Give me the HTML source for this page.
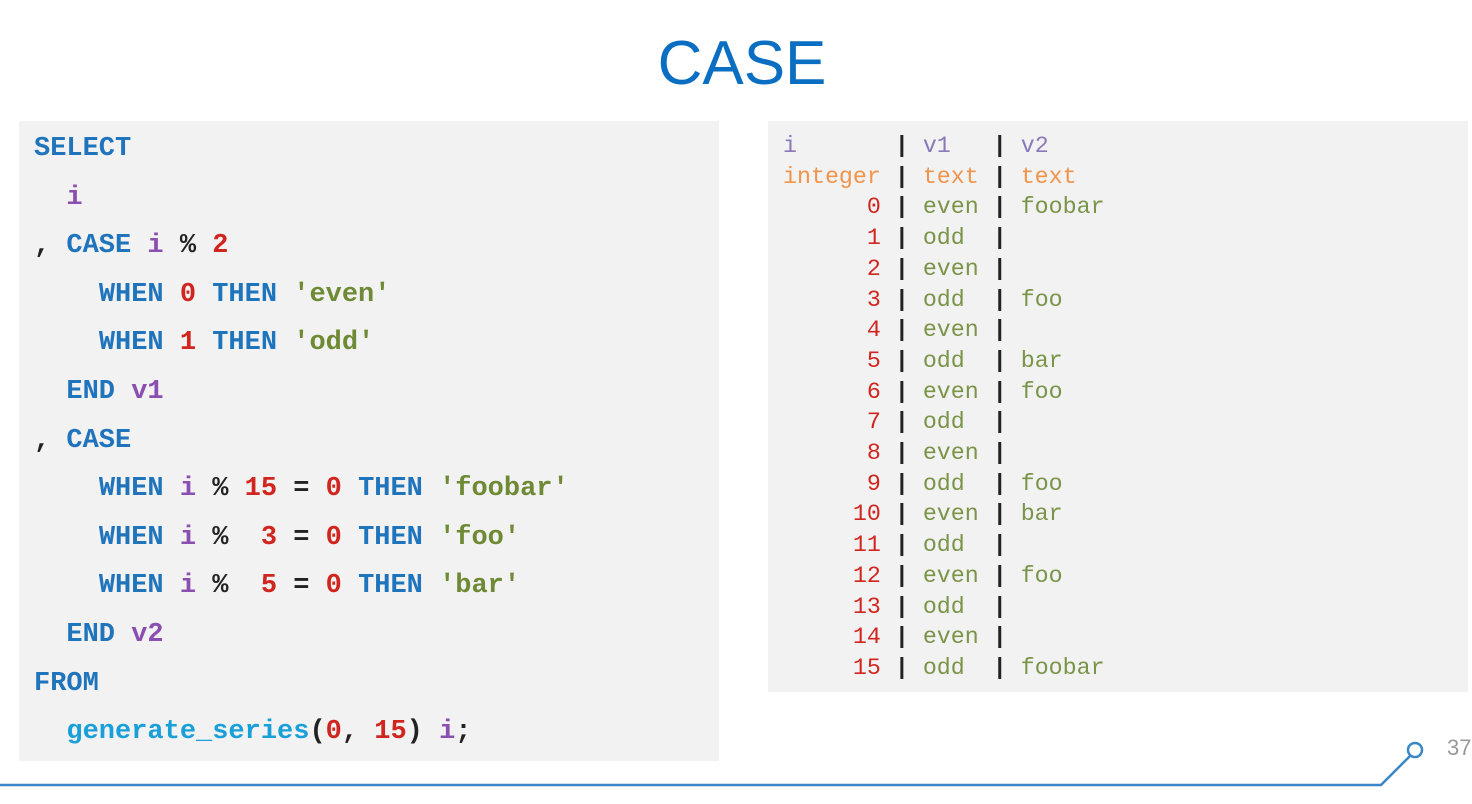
<!DOCTYPE html>
<html><head><meta charset="utf-8"><style>
body{margin:0;width:1472px;height:804px;background:#fff;position:relative;overflow:hidden;font-family:"Liberation Sans",sans-serif}
.title{position:absolute;left:0;width:1484px;top:24px;text-align:center;font-size:62px;color:#0a6fc2;line-height:80px}
.lp{position:absolute;left:19px;top:121px;width:700px;height:640px;background:#f2f2f2}
.rp{position:absolute;left:768px;top:121px;width:700px;height:571px;background:#f2f2f2}
pre{margin:0;position:absolute;font-family:"Liberation Mono",monospace}
.code{left:34px;top:125px;font-size:27px;line-height:48.6px;font-weight:bold;color:#222}
.res{left:783px;top:131px;font-size:23.3px;line-height:30.7px;color:#222}
.k{color:#1f74bc}.v{color:#8a4fb0}.n{color:#d0261f}.s{color:#6e8a34}.f{color:#1aa0d8}
.h{color:#8a78b8}.t{color:#f0944a}.r{color:#d0261f}.g{color:#7a9448}
.b{font-weight:bold}
</style></head><body>
<div class="title">CASE</div>
<div class="lp"></div><div class="rp"></div>
<pre class="code"><span class="k">SELECT</span>
  <span class="v">i</span>
, <span class="k">CASE</span> <span class="v">i</span> % <span class="n">2</span>
    <span class="k">WHEN</span> <span class="n">0</span> <span class="k">THEN</span> <span class="s">'even'</span>
    <span class="k">WHEN</span> <span class="n">1</span> <span class="k">THEN</span> <span class="s">'odd'</span>
  <span class="k">END</span> <span class="v">v1</span>
, <span class="k">CASE</span>
    <span class="k">WHEN</span> <span class="v">i</span> % <span class="n">15</span> = <span class="n">0</span> <span class="k">THEN</span> <span class="s">'foobar'</span>
    <span class="k">WHEN</span> <span class="v">i</span> %  <span class="n">3</span> = <span class="n">0</span> <span class="k">THEN</span> <span class="s">'foo'</span>
    <span class="k">WHEN</span> <span class="v">i</span> %  <span class="n">5</span> = <span class="n">0</span> <span class="k">THEN</span> <span class="s">'bar'</span>
  <span class="k">END</span> <span class="v">v2</span>
<span class="k">FROM</span>
  <span class="f">generate_series</span>(<span class="n">0</span>, <span class="n">15</span>) <span class="v">i</span>;</pre>
<pre class="res"><span class="h">i</span>       <span class="b">|</span> <span class="h">v1</span>   <span class="b">|</span> <span class="h">v2</span>
<span class="t">integer</span> <span class="b">|</span> <span class="t">text</span> <span class="b">|</span> <span class="t">text</span>
      <span class="r">0</span> <span class="b">|</span> <span class="g">even</span> <span class="b">|</span> <span class="g">foobar</span>
      <span class="r">1</span> <span class="b">|</span> <span class="g">odd</span>  <span class="b">|</span>
      <span class="r">2</span> <span class="b">|</span> <span class="g">even</span> <span class="b">|</span>
      <span class="r">3</span> <span class="b">|</span> <span class="g">odd</span>  <span class="b">|</span> <span class="g">foo</span>
      <span class="r">4</span> <span class="b">|</span> <span class="g">even</span> <span class="b">|</span>
      <span class="r">5</span> <span class="b">|</span> <span class="g">odd</span>  <span class="b">|</span> <span class="g">bar</span>
      <span class="r">6</span> <span class="b">|</span> <span class="g">even</span> <span class="b">|</span> <span class="g">foo</span>
      <span class="r">7</span> <span class="b">|</span> <span class="g">odd</span>  <span class="b">|</span>
      <span class="r">8</span> <span class="b">|</span> <span class="g">even</span> <span class="b">|</span>
      <span class="r">9</span> <span class="b">|</span> <span class="g">odd</span>  <span class="b">|</span> <span class="g">foo</span>
     <span class="r">10</span> <span class="b">|</span> <span class="g">even</span> <span class="b">|</span> <span class="g">bar</span>
     <span class="r">11</span> <span class="b">|</span> <span class="g">odd</span>  <span class="b">|</span>
     <span class="r">12</span> <span class="b">|</span> <span class="g">even</span> <span class="b">|</span> <span class="g">foo</span>
     <span class="r">13</span> <span class="b">|</span> <span class="g">odd</span>  <span class="b">|</span>
     <span class="r">14</span> <span class="b">|</span> <span class="g">even</span> <span class="b">|</span>
     <span class="r">15</span> <span class="b">|</span> <span class="g">odd</span>  <span class="b">|</span> <span class="g">foobar</span></pre>
<svg style="position:absolute;left:0;top:0" width="1472" height="804">
<polyline points="0,785 1381,785 1410,756" fill="none" stroke="#3a86c6" stroke-width="2.5"/>
<circle cx="1415" cy="750" r="7" fill="#fff" stroke="#3a86c6" stroke-width="2.5"/>
</svg>
<div style="position:absolute;left:1447px;top:735px;font-size:22px;color:#999">37</div>
</body></html>
